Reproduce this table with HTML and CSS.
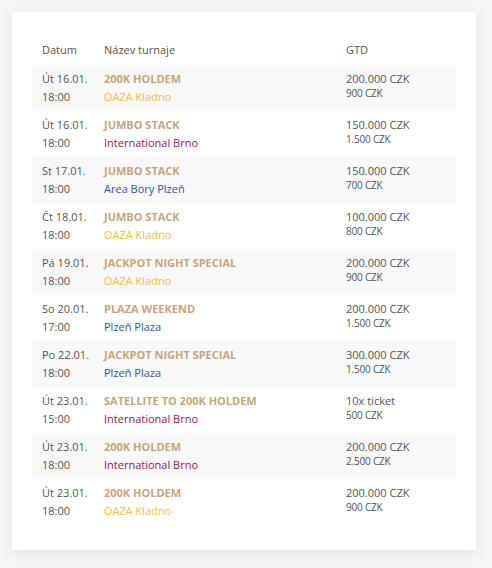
FILE: index.html
```html
<!DOCTYPE html>
<html lang="cs">
<head>
<meta charset="utf-8">
<title>Turnaje</title>
<link rel="stylesheet" href="styles.css">
</head>
<body>
<div class="card">
  <table class="tbl">
    <colgroup><col class="c-date"><col class="c-name"><col class="c-gtd"></colgroup>
    <thead>
      <tr><th>Datum</th><th>Název turnaje</th><th>GTD</th></tr>
    </thead>
    <tbody>
      <tr><td>Út 16.01.<br>18:00</td><td><span class="title">200K HOLDEM</span><br><span class="v-oaza">OAZA Kladno</span></td><td><span class="gtd">200.000 CZK</span><span class="buy">900 CZK</span></td></tr>
      <tr><td>Út 16.01.<br>18:00</td><td><span class="title">JUMBO STACK</span><br><span class="v-brno">International Brno</span></td><td><span class="gtd">150.000 CZK</span><span class="buy">1.500 CZK</span></td></tr>
      <tr><td>St 17.01.<br>18:00</td><td><span class="title">JUMBO STACK</span><br><span class="v-plzen">Area Bory Plzeň</span></td><td><span class="gtd">150.000 CZK</span><span class="buy">700 CZK</span></td></tr>
      <tr><td>Čt 18.01.<br>18:00</td><td><span class="title">JUMBO STACK</span><br><span class="v-oaza">OAZA Kladno</span></td><td><span class="gtd">100.000 CZK</span><span class="buy">800 CZK</span></td></tr>
      <tr><td>Pá 19.01.<br>18:00</td><td><span class="title">JACKPOT NIGHT SPECIAL</span><br><span class="v-oaza">OAZA Kladno</span></td><td><span class="gtd">200.000 CZK</span><span class="buy">900 CZK</span></td></tr>
      <tr><td>So 20.01.<br>17:00</td><td><span class="title">PLAZA WEEKEND</span><br><span class="v-plzen">Plzeň Plaza</span></td><td><span class="gtd">200.000 CZK</span><span class="buy">1.500 CZK</span></td></tr>
      <tr><td>Po 22.01.<br>18:00</td><td><span class="title">JACKPOT NIGHT SPECIAL</span><br><span class="v-plzen">Plzeň Plaza</span></td><td><span class="gtd">300.000 CZK</span><span class="buy">1.500 CZK</span></td></tr>
      <tr><td>Út 23.01.<br>15:00</td><td><span class="title">SATELLITE TO 200K HOLDEM</span><br><span class="v-brno">International Brno</span></td><td><span class="gtd">10x ticket</span><span class="buy">500 CZK</span></td></tr>
      <tr><td>Út 23.01.<br>18:00</td><td><span class="title">200K HOLDEM</span><br><span class="v-brno">International Brno</span></td><td><span class="gtd">200.000 CZK</span><span class="buy">2.500 CZK</span></td></tr>
      <tr><td>Út 23.01.<br>18:00</td><td><span class="title">200K HOLDEM</span><br><span class="v-oaza">OAZA Kladno</span></td><td><span class="gtd">200.000 CZK</span><span class="buy">900 CZK</span></td></tr>
    </tbody>
  </table>
</div>
</body>
</html>
```
FILE: styles.css
```css
html, body {
  margin: 0;
  padding: 0;
  background: #f6f6f6;
}
body {
  padding: 12px 16px 18px 12px;
  font-family: "Open Sans", "DejaVu Sans", sans-serif;
  font-size: 11px;
  color: #555;
}
.card {
  width: 464px;
  height: 538px;
  box-sizing: border-box;
  background: #fff;
  box-shadow: 0 3px 14px rgba(0, 0, 0, 0.08);
  padding: 29px 20px 0 20px;
}
.tbl {
  width: 424px;
  table-layout: fixed;
  border-collapse: collapse;
  border-spacing: 0;
}
.c-date { width: 62px; }
.c-name { width: 242px; }
.c-gtd { width: 120px; }
.tbl th {
  font-weight: normal;
  text-align: left;
  padding: 0 10px 6px 10px;
  line-height: 18px;
  color: #555;
}
.tbl td {
  padding: 5px 10px;
  line-height: 18px;
  vertical-align: top;
  white-space: nowrap;
}
.tbl tbody tr:nth-child(odd) {
  background: #f8f8f8;
}
.title {
  font-weight: bold;
  color: #c4a67c;
}
.v-oaza { color: #f6bd3f; }
.v-brno { color: #8c1a52; }
.v-plzen { color: #34529a; }
.gtd {
  display: block;
}
.buy {
  display: block;
  font-size: 10px;
  line-height: 10px;
  letter-spacing: -0.2px;
}
```
